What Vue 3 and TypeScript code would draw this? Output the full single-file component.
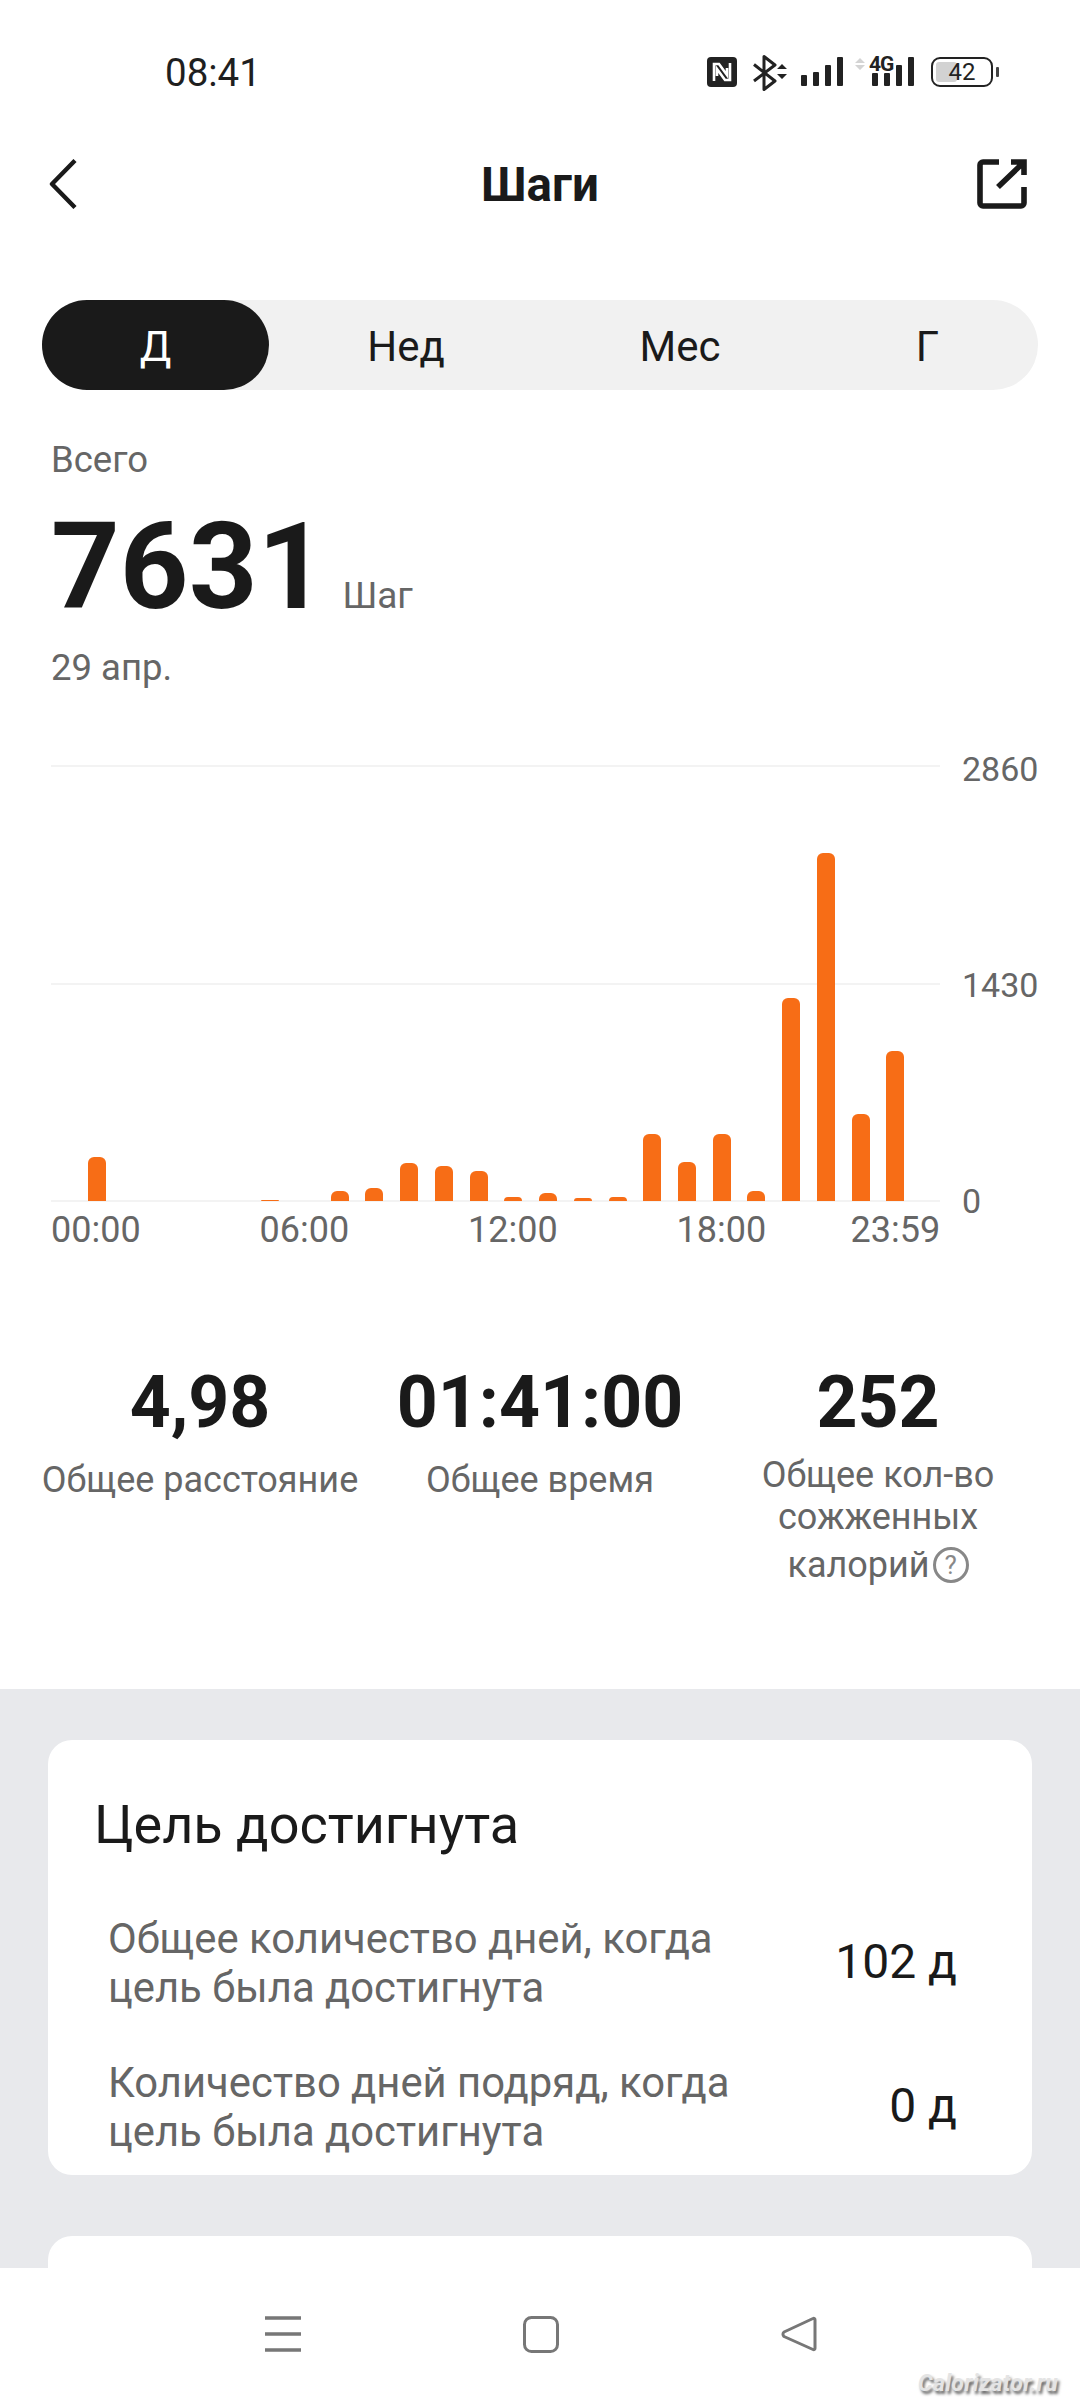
<script setup lang="ts">
const hours: number[] = [44, 0, 0, 0, 0, 1, 0, 10, 13, 38, 35, 30, 4, 8, 3, 4, 67, 39, 67, 10, 203, 348, 87, 150]
const ticks = ['00:00', '06:00', '12:00', '18:00', '23:59']
const tabs = ['Д', 'Нед', 'Мес', 'Г']
const rows = [
  { label: 'Общее количество дней, когда цель была достигнута', value: '102 д' },
  { label: 'Количество дней подряд, когда цель была достигнута', value: '0 д' }
]
</script>

<template>
  <div class="screen">
    <div class="top">
      <div class="status">
        <span class="clock">08:41</span>
        <div class="status-icons">
          <svg width="30" height="30" viewBox="0 0 30 30" class="ic-nfc">
            <rect width="30" height="30" rx="4" fill="#222" />
            <path d="M7 24V7h5l8 11V11M23 6v17h-5l-8-11v7" fill="none" stroke="#fff" stroke-width="2.6" />
          </svg>
          <svg width="34" height="36" viewBox="0 0 34 36" class="ic-bt">
            <path d="M1 9.500L22 26l-11 8.500V1.500L22 10 1 26" fill="none" stroke="#222" stroke-width="3" stroke-linejoin="round" />
            <path d="M24 14l5-5 5 5zM24 19h10l-5 5z" fill="#222" />
          </svg>
          <svg width="44" height="30" viewBox="0 0 44 30" class="ic-sig">
            <rect x="1" y="18" width="6" height="11" rx="1" fill="#222" />
            <rect x="13" y="15" width="6" height="14" rx="1" fill="#222" />
            <rect x="25" y="8" width="6" height="21" rx="1" fill="#222" />
            <rect x="37" y="0" width="6" height="29" rx="1" fill="#222" />
          </svg>
          <div class="net">
            <svg width="10" height="14" viewBox="0 0 10 14" class="net-arrows">
              <path d="M0 6l5-5 5 5zM0 8h10l-5 5z" fill="#d4d4d4" />
            </svg>
            <span class="net-4g">4G</span>
            <svg width="44" height="30" viewBox="0 0 44 30" class="net-bars">
              <rect x="2" y="16" width="6" height="13" rx="1" fill="#222" />
              <rect x="14" y="16" width="6" height="13" rx="1" fill="#222" />
              <rect x="26" y="8" width="6" height="21" rx="1" fill="#222" />
              <rect x="38" y="0" width="6" height="29" rx="1" fill="#222" />
            </svg>
          </div>
          <div class="battery">
            <div class="battery-fill"></div>
            <span class="battery-num">42</span>
            <div class="battery-nub"></div>
          </div>
        </div>
      </div>

      <header class="header">
        <svg width="28" height="50" viewBox="0 0 28 50" class="back">
          <path d="M26 1.500L3 25l23 23.500" fill="none" stroke="#1a1a1a" stroke-width="4.4" stroke-linejoin="round" />
        </svg>
        <h1 class="title">Шаги</h1>
        <svg width="50" height="50" viewBox="0 0 50 50" class="share">
          <path d="M22 3H6a3 3 0 0 0-3 3v38a3 3 0 0 0 3 3h38a3 3 0 0 0 3-3V28" fill="none" stroke="#1a1a1a" stroke-width="5.600" />
          <path d="M34 3h13v13M21 28L46 4" fill="none" stroke="#1a1a1a" stroke-width="5.600" />
        </svg>
      </header>

      <nav class="tabs">
        <div v-for="(t, i) in tabs" :key="t" class="tab" :class="{ active: i === 0 }">{{ t }}</div>
      </nav>

      <div class="total-label">Всего</div>
      <div class="total">
        <span class="total-num">7631</span>
        <span class="total-unit">Шаг</span>
      </div>
      <div class="total-date">29 апр.</div>

      <div class="chart">
        <div class="plot-col">
          <div class="plot">
            <div class="grid-line g-top"></div>
            <div class="grid-line g-mid"></div>
            <div class="grid-line g-bot"></div>
            <div class="bars">
              <div v-for="(h, i) in hours" :key="i" class="bar" :style="{ height: h + 'px' }"></div>
            </div>
          </div>
          <div class="ticks">
            <span v-for="t in ticks" :key="t" class="tick">{{ t }}</span>
          </div>
        </div>
        <div class="axis">
          <span>2860</span>
          <span>1430</span>
          <span>0</span>
        </div>
      </div>

      <div class="stats">
        <div class="stat">
          <div class="stat-num">4,98</div>
          <div class="stat-label">Общее расстояние</div>
        </div>
        <div class="stat">
          <div class="stat-num">01:41:00</div>
          <div class="stat-label">Общее время</div>
        </div>
        <div class="stat">
          <div class="stat-num">252</div>
          <div class="stat-label stat-label-long">
            <div>Общее кол-во</div>
            <div>сожженных</div>
            <div class="last-line">калорий<span class="help">?</span></div>
          </div>
        </div>
      </div>
    </div>

    <section class="lower">
      <div class="card">
        <h2 class="card-title">Цель достигнута</h2>
        <div class="rows">
          <div v-for="r in rows" :key="r.value" class="row">
            <div class="row-label">{{ r.label }}</div>
            <div class="row-value">{{ r.value }}</div>
          </div>
        </div>
      </div>
      <div class="card card-next"></div>
    </section>

    <footer class="navbar">
      <svg width="36" height="36" viewBox="0 0 36 36">
        <path d="M0 2h36M0 18h36M0 34h36" stroke="#777" stroke-width="3.400" fill="none" />
      </svg>
      <svg width="36" height="37" viewBox="0 0 36 37">
        <rect x="1.500" y="1.500" width="33" height="34" rx="7" stroke="#777" stroke-width="3" fill="none" />
      </svg>
      <svg width="36" height="36" viewBox="0 0 36 36">
        <path d="M32 2.500c1-.6 2 0 2 1.200v28.600c0 1.200-1 1.800-2 1.200L3 20.500c-1.400-1.200-1.400-3.200 0-4.500z" stroke="#777" stroke-width="3" fill="none" stroke-linejoin="round" />
      </svg>
      <span class="watermark">Calorizator.ru</span>
    </footer>
  </div>
</template>

<style>
html, body { margin: 0; background: #fff; }
</style>

<style scoped>
.screen {
  width: 1080px;
  height: 2400px;
  overflow: hidden;
  display: flex;
  flex-direction: column;
  background: #fff;
  font-family: Roboto, "Noto Sans", sans-serif;
  color: #1a1a1a;
}
.top { height: 1689px; flex: none; box-sizing: border-box; }

.status {
  height: 144px;
  display: flex;
  align-items: center;
  justify-content: space-between;
  padding: 0 87px 0 165px;
  box-sizing: border-box;
}
.clock { font-size: 38.500px; line-height: 46px; padding-top: 2px; color: #1f1f1f; }
.status-icons { display: flex; align-items: flex-start; height: 30px; }
.ic-nfc { margin-right: 16px; }
.ic-bt { margin: -2px 13px 0 0; }
.ic-sig { margin-right: 11px; }
.net { position: relative; width: 59px; height: 30px; display: flex; justify-content: flex-end; margin-right: 17px; }
.net-arrows { position: absolute; left: 0; top: 0; }
.net-4g {
  position: absolute; left: 14px; top: -4px;
  font-size: 21px;
  line-height: 22px;
  font-weight: 700;
  color: #222;
  letter-spacing: -1px;
}
.net-bars { flex: none; }
.battery {
  position: relative;
  width: 62px; height: 30px;
  box-sizing: border-box;
  border: 2.500px solid #222;
  border-radius: 9px;
  display: flex; align-items: center; justify-content: center;
}
.battery-fill { position: absolute; left: 3px; top: 3px; bottom: 3px; width: 21px; background: #d2d2d2; border-radius: 3px; }
.battery-num { position: relative; font-size: 24px; line-height: 24px; color: #222; }
.battery-nub { position: absolute; right: -7.500px; top: 7.500px; width: 3px; height: 10px; background: #444; border-radius: 1px; }

.header {
  height: 80px;
  display: flex;
  align-items: center;
  justify-content: space-between;
  padding: 0 53px 0 49px;
  position: relative;
}
.title {
  margin: 0;
  position: absolute;
  left: 0; right: 0;
  top: 11px;
  text-align: center;
  font-size: 47.500px;
  line-height: 60px;
  font-weight: 700;
}
.tabs {
  margin: 76px 42px 0;
  height: 90px;
  border-radius: 45px;
  background: #f1f1f1;
  display: grid;
  grid-template-columns: 227px 274px 274px 221px;
}
.tab { display: flex; align-items: center; justify-content: center; padding-top: 2px; font-size: 42px; color: #1a1a1a; }
.tab.active { background: #1a1a1a; color: #fff; border-radius: 45px; }

.total-label { margin: 50px 0 0 51px; font-size: 36.500px; line-height: 40px; color: #666; }
.total { margin: 27px 0 0 51px; display: flex; align-items: baseline; height: 120px; }
.total-num { font-size: 120px; line-height: 120px; font-weight: 700; }
.total-unit { margin-left: 16px; font-size: 37px; line-height: 40px; color: #666; }
.total-date { margin: 21px 0 0 51px; font-size: 36.500px; line-height: 40px; color: #666; }

.chart { margin: 77px 42px 0 51px; display: flex; }
.plot-col { width: 889px; flex: none; }
.plot { position: relative; height: 436px; }
.grid-line { position: absolute; left: 0; right: 0; height: 2px; background: #f3f3f3; }
.g-top { top: 0; }
.g-mid { top: 218px; }
.g-bot { bottom: -1px; }
.bars { position: absolute; inset: 0 0 0 36.500px; display: flex; align-items: flex-end; gap: 16.740px; }
.bar { width: 18px; flex: none; background: #f76d16; border-radius: 6px 6px 0 0; }
.ticks { margin-top: 9px; display: flex; font-size: 36px; line-height: 40px; color: #666; }
.tick { width: 208.500px; flex: none; }
.tick:nth-child(4) { width: 174px; }
.tick:last-child { width: auto; }
.axis {
  margin: -16.500px 0 0 22px;
  height: 472.500px;
  display: flex;
  flex-direction: column;
  justify-content: space-between;
  font-size: 34px;
  line-height: 40px;
  color: #666;
}

.stats { margin-top: 113px; display: grid; grid-template-columns: 400px 280px 396px; }
.stat { min-width: 0; display: flex; flex-direction: column; align-items: center; text-align: center; }
.stat-num { font-size: 71.500px; line-height: 80px; font-weight: 700; white-space: nowrap; }
.stat-label { margin-top: 14px; font-size: 36px; line-height: 47px; color: #666; white-space: nowrap; }
.stat-label-long { margin-top: 11px; line-height: 42px; }
.last-line { margin-top: 6px; display: flex; align-items: center; justify-content: center; gap: 3px; }
.help {
  display: flex;
  align-items: center;
  justify-content: center;
  width: 36px; height: 36px;
  box-sizing: border-box;
  border: 3px solid #888;
  border-radius: 50%;
  font-size: 26px;
  line-height: 30px;
  color: #888;
}

.lower {
  flex: 1;
  min-height: 0;
  overflow: hidden;
  background: #e8e9ec;
  padding: 51px 48px 0;
  box-sizing: border-box;
}
.card { height: 435px; box-sizing: border-box; background: #fff; border-radius: 24px; padding: 55px 46px 0; }
.card-next { margin-top: 61px; height: 300px; }
.card-title { margin: 0; font-size: 54px; line-height: 60px; font-weight: 400; color: #1a1a1a; }
.rows { margin-top: 59px; padding: 0 29px 0 14px; display: flex; flex-direction: column; gap: 46px; }
.row { display: flex; align-items: center; justify-content: space-between; }
.row-label { width: 660px; font-size: 41.800px; line-height: 49px; color: #666; }
.row-value { margin-bottom: 2px; font-size: 48px; line-height: 50px; color: #1a1a1a; white-space: nowrap; }

.navbar {
  height: 132px;
  flex: none;
  position: relative;
  background: #fff;
  display: flex;
  align-items: flex-start;
  padding: 48px 0 0 265px;
  gap: 222px;
  box-sizing: border-box;
}
.watermark {
  position: absolute;
  left: 918px;
  top: 103px;
  font-size: 23px;
  line-height: 26px;
  font-weight: 700;
  font-style: italic;
  letter-spacing: .3px;
  color: #e4e4e4;
  text-shadow: 2px 3px 3px #666;
}
</style>
